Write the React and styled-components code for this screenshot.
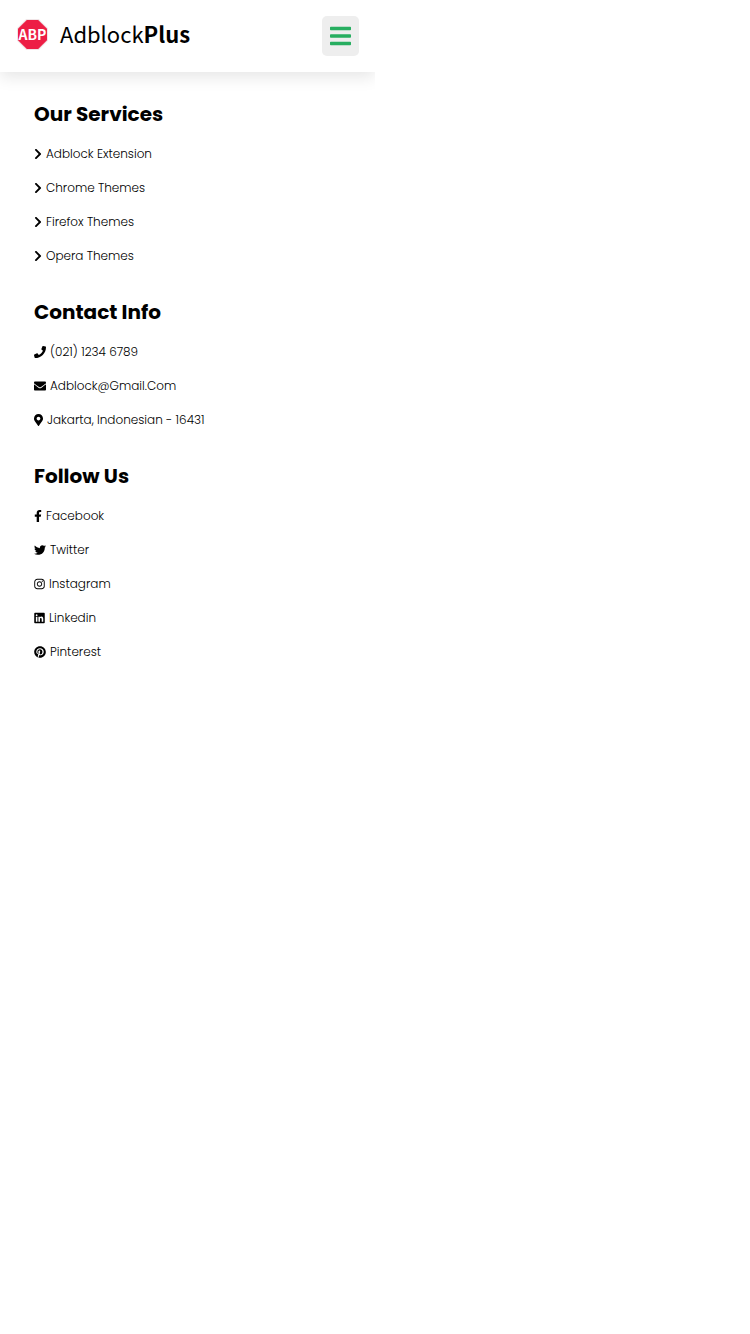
import React from "react";
import styled, { createGlobalStyle } from "styled-components";
import {
  FaBars,
  FaChevronRight,
  FaEnvelope,
  FaFacebookF,
  FaInstagram,
  FaLinkedin,
  FaMapMarkerAlt,
  FaPhone,
  FaPinterest,
  FaTwitter,
} from "react-icons/fa";

const GlobalStyle = createGlobalStyle`
  * {
    box-sizing: border-box;
    margin: 0;
    padding: 0;
  }
  body {
    background: #fff;
    color: #000;
    font-family: Poppins, Inter, sans-serif;
  }
`;

const Page = styled.div`
  width: 50%;
  overflow: hidden;
`;

const Header = styled.header`
  display: flex;
  align-items: center;
  justify-content: space-between;
  padding: 16px;
  background: #fff;
  box-shadow: 0 5px 15px rgba(0, 0, 0, 0.1);
`;

const Brand = styled.a`
  display: flex;
  align-items: center;
  gap: 11px;
  padding-bottom: 3px;
  color: #000;
  text-decoration: none;
  font-family: "Noto Sans CJK SC", sans-serif;
  font-size: 22px;
  line-height: 32px;
`;

const BrandName = styled.span`
  padding-bottom: 4px;
`;

const Badge = styled.svg`
  width: 33px;
  height: 33px;
  text {
    font-size: 14px;
    font-weight: 700;
  }
`;

const MenuButton = styled.button`
  display: flex;
  padding: 8px;
  border: 0;
  border-radius: 5px;
  background: #eee;
  color: #27ae60;
  cursor: pointer;
  svg {
    width: 21px;
    height: 24px;
  }
`;

const Footer = styled.footer`
  display: flex;
  flex-direction: column;
  gap: 24px;
  padding: 27px 34px;
`;

const Heading = styled.h3`
  margin-bottom: 8px;
  font-size: 20px;
  font-weight: 700;
  line-height: 30px;
`;

const List = styled.ul`
  list-style: none;
`;

const ItemLink = styled.a`
  display: flex;
  align-items: center;
  gap: 4px;
  padding: 8px 0;
  color: #000;
  font-size: 12px;
  font-weight: 300;
  line-height: 18px;
  text-decoration: none;
  svg {
    flex: none;
    width: ${({ $iconWidth }) => $iconWidth}px;
    height: 12px;
  }
`;

const sections = [
  {
    title: "Our Services",
    items: [
      { icon: FaChevronRight, width: 8, label: "Adblock Extension" },
      { icon: FaChevronRight, width: 8, label: "Chrome Themes" },
      { icon: FaChevronRight, width: 8, label: "Firefox Themes" },
      { icon: FaChevronRight, width: 8, label: "Opera Themes" },
    ],
  },
  {
    title: "Contact Info",
    items: [
      { icon: FaPhone, width: 12, label: "(021) 1234 6789" },
      { icon: FaEnvelope, width: 12, label: "Adblock@Gmail.Com" },
      { icon: FaMapMarkerAlt, width: 9, label: "Jakarta, Indonesian - 16431" },
    ],
  },
  {
    title: "Follow Us",
    items: [
      { icon: FaFacebookF, width: 8, label: "Facebook" },
      { icon: FaTwitter, width: 12, label: "Twitter" },
      { icon: FaInstagram, width: 11, label: "Instagram" },
      { icon: FaLinkedin, width: 11, label: "Linkedin" },
      { icon: FaPinterest, width: 12, label: "Pinterest" },
    ],
  },
];

export default function App() {
  return (
    <Page>
      <GlobalStyle />
      <Header>
        <Brand href="#">
          <Badge viewBox="0 0 33 33" aria-hidden="true">
            <path d="M10.2 1h12.6L32 10.2v12.6L22.8 32H10.2L1 22.8V10.2z" fill="#f0e4e6" />
            <path d="M10.8 2h11.4L31 10.8v11.4L22.2 31H10.8L2 22.2V10.8z" fill="#ed1e45" />
            <text x="16.5" y="22" textAnchor="middle" fill="#fff">ABP</text>
          </Badge>
          <BrandName>
            Adblock<b>Plus</b>
          </BrandName>
        </Brand>
        <MenuButton type="button" aria-label="Menu">
          <FaBars />
        </MenuButton>
      </Header>
      <Footer>
        {sections.map(({ title, items }) => (
          <section key={title}>
            <Heading>{title}</Heading>
            <List>
              {items.map(({ icon: Icon, width, label }) => (
                <li key={label}>
                  <ItemLink href="#" $iconWidth={width}>
                    <Icon aria-hidden="true" />
                    {label}
                  </ItemLink>
                </li>
              ))}
            </List>
          </section>
        ))}
      </Footer>
    </Page>
  );
}
